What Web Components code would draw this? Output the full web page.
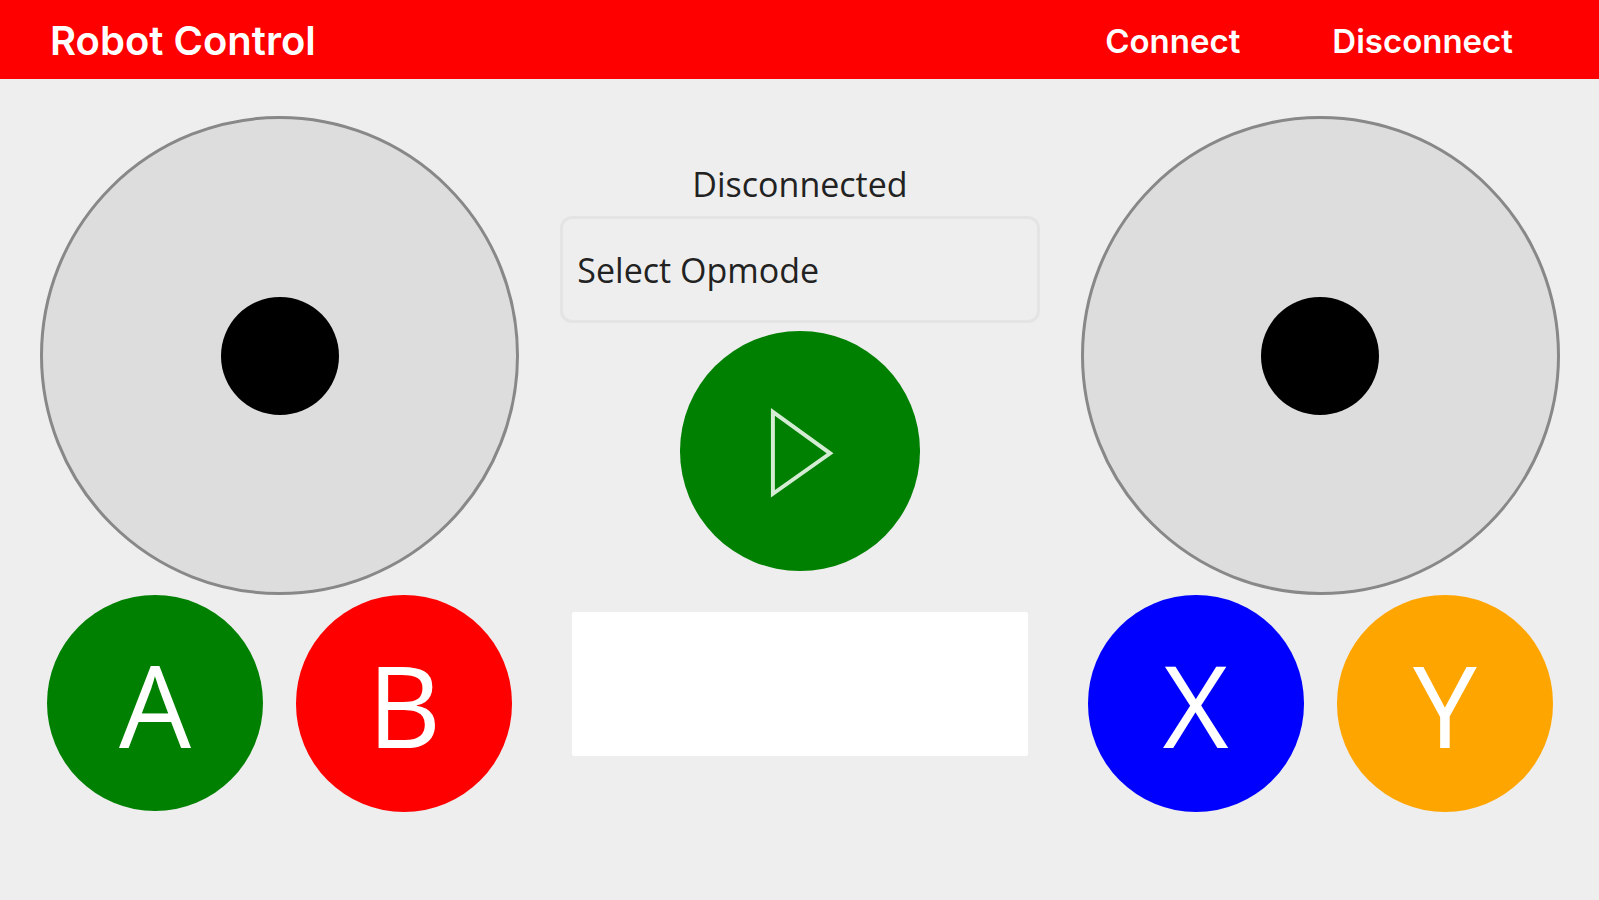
<!DOCTYPE html>
<html lang="en">
<head>
<meta charset="utf-8">
<meta name="viewport" content="width=device-width, initial-scale=1">
<title>Robot Control</title>
<style>
  body { margin: 0; min-height: 100vh; background: #eee; color: #222; font-family: "Open Sans", "Noto Sans", sans-serif; }
</style>
</head>
<body>
<robot-app></robot-app>
<script>
const define = (name, html, setup) => {
  const template = document.createElement('template');
  template.innerHTML = html;
  customElements.define(name, class extends HTMLElement {
    constructor() {
      super();
      this.attachShadow({ mode: 'open' }).append(template.content.cloneNode(true));
    }
    connectedCallback() { if (setup) setup(this, this.shadowRoot); }
  });
};

define('app-bar', `
  <style>
    :host { display: block; background: #f00; color: #fff; font-family: Inter, Roboto, sans-serif; }
    header { display: flex; align-items: center; justify-content: space-between; box-sizing: border-box; height: 79px; padding: 2px 86px 0 50px; }
    h1 { margin: 0; font-size: 40px; line-height: 48px; font-weight: 600; }
    nav { display: flex; gap: 92px; }
  </style>
  <header><h1><slot></slot></h1><nav><slot name="actions"></slot></nav></header>`);

define('bar-action', `
  <style>
    :host { display: block; }
    button { display: block; margin: 0; padding: 0; border: 0; background: none; color: inherit; font: inherit; font-size: 33px; line-height: 48px; font-weight: 600; cursor: pointer; }
  </style>
  <button type="button"><slot></slot></button>`);

define('joy-stick', `
  <style>
    :host { display: block; }
    .base { box-sizing: border-box; width: 100%; aspect-ratio: 1; border: 3px solid #888; border-radius: 50%; background: #ddd; display: grid; place-items: center; }
    .knob { width: 25%; aspect-ratio: 1; border-radius: 50%; background: #000; }
  </style>
  <div class="base" role="img"><div class="knob"></div></div>`,
  (host, root) => root.querySelector('.base').setAttribute('aria-label', host.getAttribute('label')));

define('round-button', `
  <style>
    :host { display: block; }
    button { display: grid; place-items: center; box-sizing: border-box; width: 100%; aspect-ratio: 1; margin: 0; padding: 2px 0 0; border: 0; border-radius: 50%; background: var(--fill, green); color: #fff; font: inherit; font-size: 114px; line-height: 160px; cursor: pointer; }
  </style>
  <button type="button"><slot></slot></button>`,
  (host, root) => {
    const label = host.getAttribute('label');
    if (label) root.querySelector('button').setAttribute('aria-label', label);
  });

define('play-icon', `
  <style>
    :host { display: block; width: 28%; }
    svg { display: block; width: 100%; }
  </style>
  <svg viewBox="0 0 68 96" aria-hidden="true"><path d="M7 8V91L65 50Z" fill="none" stroke="#d3ecd3" stroke-width="4"/></svg>`);

define('stick-pad', `
  <style>
    :host { display: block; }
    .buttons { display: grid; grid-template-columns: 1fr 1fr; gap: 33px; padding: 0 7px; }
  </style>
  <slot name="stick"></slot><div class="buttons"><slot></slot></div>`);

define('opmode-select', `
  <style>
    :host { display: block; }
    select { appearance: none; display: block; box-sizing: border-box; width: 100%; height: 107px; margin: 0; padding: 0 14px; border: 3px solid #e4e4e4; border-radius: 12px; background: transparent; color: #222; font: inherit; font-size: 34px; }
  </style>
  <select aria-label="Opmode"><option>Select Opmode</option></select>`);

define('message-log', `
  <style>
    :host { display: block; }
    textarea { display: block; box-sizing: border-box; width: 100%; height: 144px; margin: 0; padding: 12px; border: 0; border-radius: 2px; background: #fff; resize: none; font: inherit; font-size: 24px; }
  </style>
  <textarea readonly aria-label="Messages"></textarea>`);

define('robot-app', `
  <style>
    :host { display: block; }
    main { display: grid; grid-template-columns: repeat(3, minmax(0, 1fr)); gap: 41px; padding: 37px 39px 37px 40px; }
    .center { display: flex; flex-direction: column; padding-top: 44px; }
    .status { margin: 0; font-size: 34px; line-height: 48px; text-align: center; }
    opmode-select { margin-top: 8px; }
    .play { width: 50%; margin: 8px auto 0; }
    message-log { margin: 41px 12px 0; }
    .a { --fill: #008000; } .b { --fill: #f00; } .x { --fill: #00f; } .y { --fill: #ffa500; }
  </style>
  <app-bar>Robot Control
    <bar-action slot="actions">Connect</bar-action>
    <bar-action slot="actions">Disconnect</bar-action>
  </app-bar>
  <main>
    <stick-pad>
      <joy-stick slot="stick" label="Left joystick"></joy-stick>
      <round-button class="a">A</round-button>
      <round-button class="b">B</round-button>
    </stick-pad>
    <section class="center">
      <p class="status" role="status">Disconnected</p>
      <opmode-select></opmode-select>
      <round-button class="play" label="Start"><play-icon></play-icon></round-button>
      <message-log></message-log>
    </section>
    <stick-pad>
      <joy-stick slot="stick" label="Right joystick"></joy-stick>
      <round-button class="x">X</round-button>
      <round-button class="y">Y</round-button>
    </stick-pad>
  </main>`);
</script>
</body>
</html>
